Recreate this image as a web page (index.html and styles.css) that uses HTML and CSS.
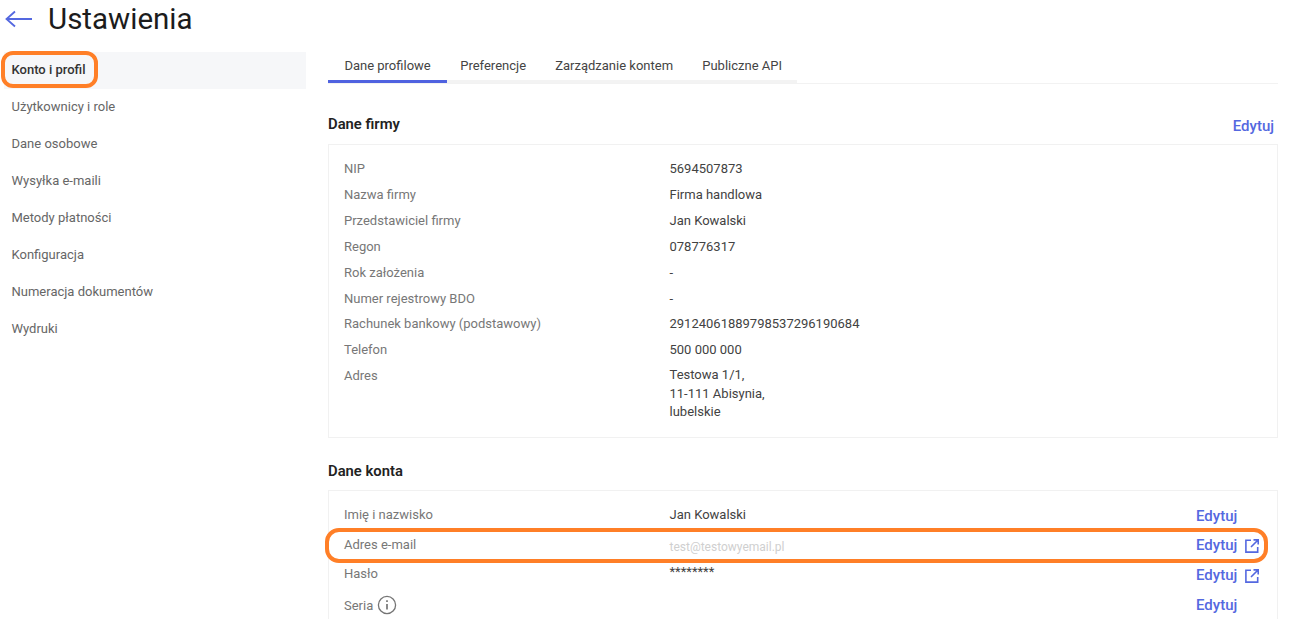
FILE: index.html
```html
<!DOCTYPE html>
<html lang="pl">

<head>
    <meta charset="UTF-8">
    <title>Ustawienia</title>
    <link rel="stylesheet" href="styles.css">
</head>

<body>

<header class="page-header">
    <svg class="back-icon" width="28" height="20" viewBox="0 0 28 20" fill="none" stroke="#5468e0" stroke-width="1.8">
        <path d="M1.5 10H27M10 2.5L1.5 10l8.5 7.5"/>
    </svg>
    <h1>Ustawienia</h1>
</header>

<div class="layout">
    <nav class="sidebar">
        <a class="side-item active">Konto i profil</a>
        <a class="side-item">Użytkownicy i role</a>
        <a class="side-item">Dane osobowe</a>
        <a class="side-item">Wysyłka e-maili</a>
        <a class="side-item">Metody płatności</a>
        <a class="side-item">Konfiguracja</a>
        <a class="side-item">Numeracja dokumentów</a>
        <a class="side-item">Wydruki</a>
    </nav>

    <main class="content">
        <div class="tabs-line">
            <div class="tabs">
                <a class="tab active">Dane profilowe</a>
                <a class="tab">Preferencje</a>
                <a class="tab">Zarządzanie kontem</a>
                <a class="tab">Publiczne API</a>
            </div>
        </div>

        <div class="section-head">
            <h2>Dane firmy</h2>
            <a class="edit">Edytuj</a>
        </div>
        <section class="card company">
            <div class="row"><span class="label">NIP</span><span class="value">5694507873</span></div>
            <div class="row"><span class="label">Nazwa firmy</span><span class="value">Firma handlowa</span></div>
            <div class="row"><span class="label">Przedstawiciel firmy</span><span class="value">Jan Kowalski</span></div>
            <div class="row"><span class="label">Regon</span><span class="value">078776317</span></div>
            <div class="row"><span class="label">Rok założenia</span><span class="value">-</span></div>
            <div class="row"><span class="label">Numer rejestrowy BDO</span><span class="value">-</span></div>
            <div class="row"><span class="label">Rachunek bankowy (podstawowy)</span><span class="value">29124061889798537296190684</span></div>
            <div class="row"><span class="label">Telefon</span><span class="value">500 000 000</span></div>
            <div class="row address"><span class="label">Adres</span><span class="value">Testowa 1/1,<br>11-111 Abisynia,<br>lubelskie</span></div>
        </section>

        <h2 class="account-title">Dane konta</h2>
        <section class="card account">
            <div class="row">
                <span class="label">Imię i nazwisko</span><span class="value">Jan Kowalski</span>
                <span class="actions"><a class="edit">Edytuj</a></span>
            </div>
            <div class="row">
                <span class="label">Adres e-mail</span><span class="value faded">test@testowyemail.pl</span>
                <span class="actions">
                    <a class="edit">Edytuj</a>
                    <svg class="open-icon" width="14" height="14" viewBox="0 0 14 14" fill="none" stroke="#5468e0" stroke-width="1.6">
                        <path d="M6 1.3H.9v11.8h11.8V8M8.5.9h4.7v4.7M13 1L6 8"/>
                    </svg>
                </span>
            </div>
            <div class="row">
                <span class="label">Hasło</span><span class="value stars">********</span>
                <span class="actions">
                    <a class="edit">Edytuj</a>
                    <svg class="open-icon" width="14" height="14" viewBox="0 0 14 14" fill="none" stroke="#5468e0" stroke-width="1.6">
                        <path d="M6 1.3H.9v11.8h11.8V8M8.5.9h4.7v4.7M13 1L6 8"/>
                    </svg>
                </span>
            </div>
            <div class="row">
                <span class="label series">Seria
                    <svg class="info-icon" width="20" height="20" viewBox="0 0 20 20" fill="none" stroke="#757575" stroke-width="1.3">
                        <circle cx="10" cy="10" r="8.6"/>
                        <path d="M10 9v5.5" stroke-width="1.7"/>
                        <path d="M10 5.3v1.8" stroke-width="1.7"/>
                    </svg>
                </span>
                <span class="value"></span>
                <span class="actions"><a class="edit">Edytuj</a></span>
            </div>
        </section>
    </main>
</div>

<div class="mark mark-side"></div>
<div class="mark mark-email"></div>

</body>
</html>
```

FILE: styles.css
```css
html, body {
    height: 619px;
    overflow: hidden;
}

body {
    margin: 0;
    font-family: Roboto, Arial, sans-serif;
    font-size: 13px;
    color: #424242;
    background-color: #fff;
    position: relative;
}

h1, h2 {
    margin: 0;
}

.page-header {
    display: flex;
    align-items: center;
    height: 38px;
    padding-left: 5px;
}

.back-icon {
    margin-right: 15px;
}

h1 {
    font-size: 29.5px;
    font-weight: 400;
    color: #1c1c1c;
    margin-top: -1px;
}

.layout {
    display: flex;
    padding: 14px 12px 0 4px;
}

.sidebar {
    width: 302px;
    flex-shrink: 0;
    margin-right: 22px;
}

.side-item {
    display: block;
    height: 37px;
    line-height: 35px;
    padding-left: 7.5px;
    color: #666;
}

.side-item.active {
    background-color: #f6f7f9;
    color: #333;
    font-weight: 500;
}

.content {
    flex: 1;
    min-width: 0;
}

.tabs-line {
    border-bottom: 1px solid #f2f2f2;
    height: 31px;
}

.tabs {
    display: inline-flex;
    height: 31px;
    border-bottom: 3px solid #f3f3f3;
    box-sizing: border-box;
    width: 469px;
}

.tab {
    height: 31px;
    box-sizing: border-box;
    padding: 6px 16.1px 0 16.1px;
    margin-right: -3px;
    color: #444;
    white-space: nowrap;
}

.tab.active {
    border-bottom: 3px solid #4f62e0;
    padding-left: 16.4px;
    padding-right: 16.4px;
}

.section-head {
    display: flex;
    justify-content: space-between;
    align-items: flex-end;
    height: 60px;
    padding-right: 4px;
    padding-bottom: 9px;
    box-sizing: border-box;
}

h2 {
    font-size: 14.8px;
    font-weight: 600;
    color: #222;
}

.section-head h2 {
    margin-bottom: 2px;
}

.edit {
    font-size: 15px;
    font-weight: 500;
    color: #5468e0;
}

.card {
    border: 1px solid #f1f1f1;
    padding: 11.4px 15px 0;
}

.company {
    height: 294px;
    box-sizing: border-box;
}

.row {
    display: flex;
    height: 25.85px;
    line-height: 25.85px;
}

.label {
    width: 325.5px;
    flex-shrink: 0;
    color: #777;
}

.value {
    flex: 1;
}

.address {
    height: auto;
}

.address .value {
    line-height: 18.5px;
    padding-top: 3px;
}

.account-title {
    margin-top: 24px;
    height: 28px;
}

.account {
    padding-top: 9px;
    height: 140px;
    box-sizing: border-box;
}

.account .row {
    height: 29.7px;
    line-height: 29.7px;
}

.account .faded {
    color: #cfcfcf;
    font-size: 12px;
    margin-top: 3px;
}

.account .stars {
    line-height: 24px;
    margin-top: 1px;
}

.account .series {
    margin-top: 2px;
}

.actions {
    width: 66px;
    display: flex;
    align-items: center;
    padding-top: 3px;
}

.open-icon {
    margin-left: 8px;
}

.info-icon {
    vertical-align: -5px;
    margin-left: 1px;
}

.mark {
    position: absolute;
    border: 4px solid #ff7f27;
    box-sizing: border-box;
}

.mark-side {
    left: 1px;
    top: 51px;
    width: 97px;
    height: 37px;
    border-radius: 12px;
}

.mark-email {
    left: 325px;
    top: 528px;
    width: 943px;
    height: 35px;
    border-radius: 14px;
}
```
